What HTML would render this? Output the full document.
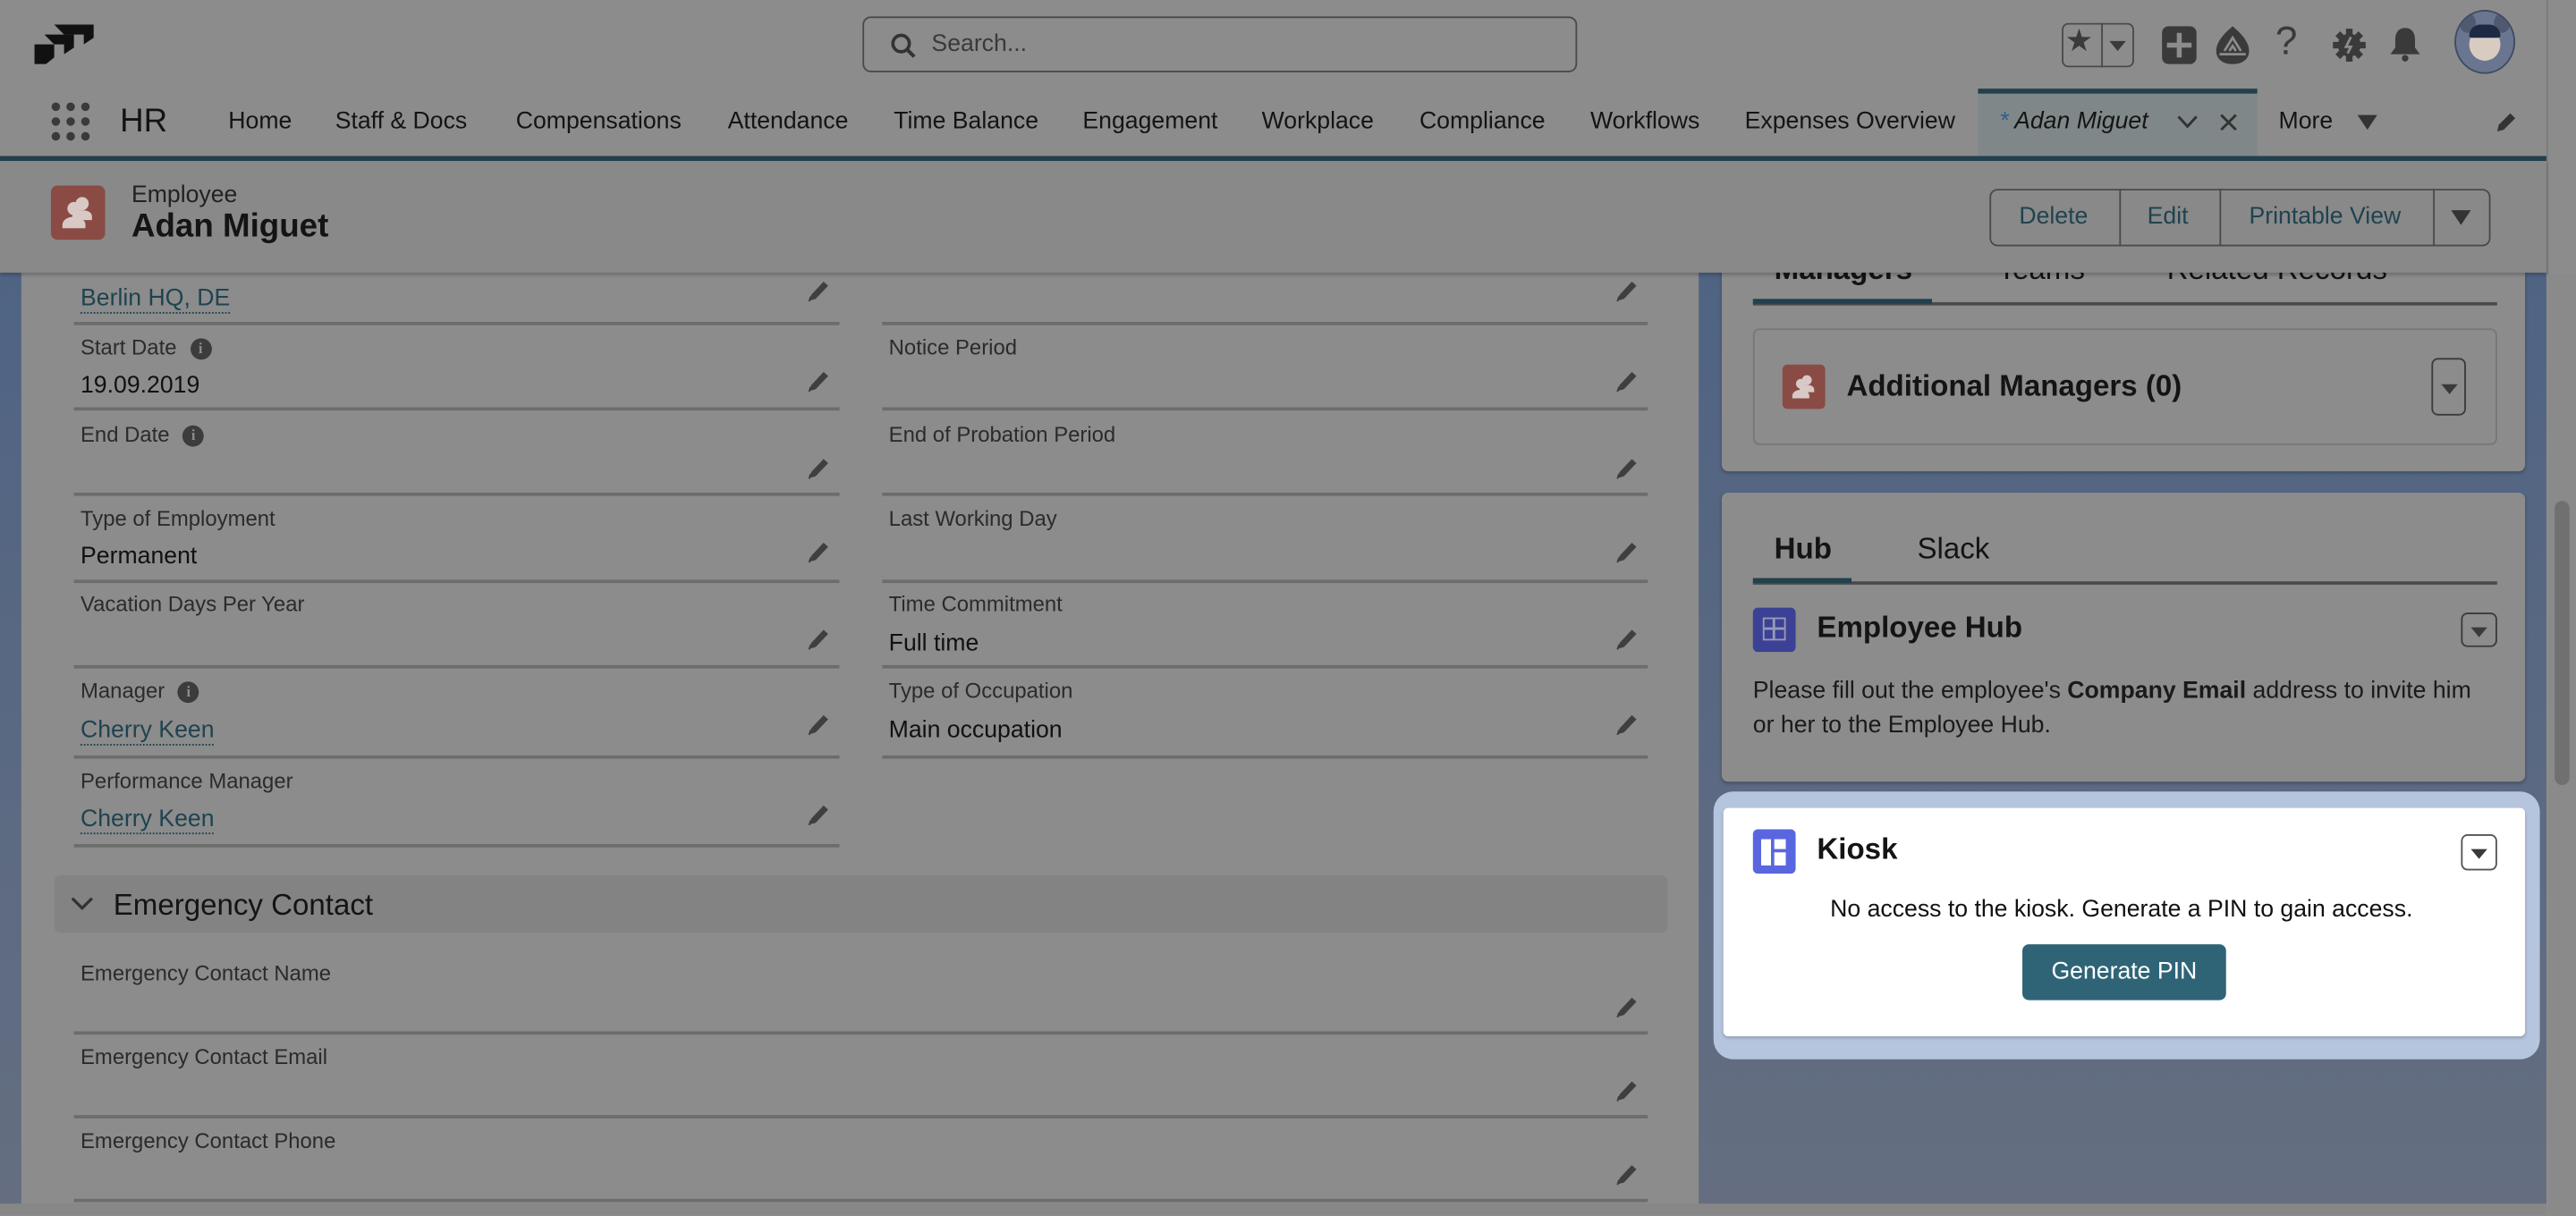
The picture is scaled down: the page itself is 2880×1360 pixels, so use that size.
<!DOCTYPE html>
<html><head><meta charset="utf-8"><style>
*{box-sizing:border-box;margin:0;padding:0}
html,body{width:2880px;height:1360px;overflow:hidden;background:#8c8c8c}
#w{position:absolute;left:0;top:0;width:1568px;height:740px;transform:scale(1.836735);transform-origin:0 0;font-family:"Liberation Sans",sans-serif;color:#141414;background:#8c8c8c}
.a{position:absolute}
.t{position:absolute;white-space:nowrap}
.nav{font-size:14.5px;top:66px;color:#141414}
.lbl{font-size:13px;color:#2b2b2b}
.val{font-size:14.5px;color:#111}
.lnk{font-size:14.5px;color:#1f4350;border-bottom:1px dotted #1f4350;line-height:15px}
.div{position:absolute;height:1.5px;background:#6c6c6c}
.pen{position:absolute;width:14px;height:14px}
.dd{position:absolute;border:1px solid #3a3a3a;border-radius:4px}
.dd:after{content:"";position:absolute;left:50%;top:50%;margin:-2px 0 0 -5px;border-left:5px solid transparent;border-right:5px solid transparent;border-top:6px solid #3a3a3a}
.ii{display:inline-block;width:13px;height:13px;border-radius:50%;background:#3c3c3c;color:#8c8c8c;font-size:9px;font-weight:bold;text-align:center;line-height:13px;margin-left:8px;vertical-align:1px;font-family:"Liberation Serif",serif}
.hz{z-index:5}
</style></head><body><div id="w">
<!-- body background -->
<div class="a" style="left:0;top:160px;width:1550px;height:573px;background:linear-gradient(180deg,#4f6383,#5c6a82 60%,#646e80)"></div>
<div class="a" style="left:13px;top:160px;width:1021px;height:573px;background:#8c8c8c"></div>
<div class="a" style="left:0;top:733px;width:1550px;height:7px;background:#878787"></div>
<div class="a" style="left:1551px;top:167px;width:17px;height:573px;background:#8a8a8a"></div>
<div class="a" style="left:1555px;top:305px;width:9px;height:173px;background:#707070;border-radius:5px"></div>

<!-- top bar -->
<div class="a hz" style="left:0;top:0;width:1550px;height:95px;background:#8c8c8c"></div>
<svg class="a hz" style="left:19px;top:15px" width="40" height="26" viewBox="0 0 40 26"><path d="M14 0h24v8l-6 4V6H20z" fill="#111"/><path d="M8 6h18v8l-6 4v-6H14z" fill="#111"/><path d="M2 12h12v8l-5 4H2z" fill="#111"/></svg>
<div class="a hz" style="left:525px;top:10px;width:435px;height:34px;border:1.5px solid #4a4a4a;border-radius:5px"></div>
<svg class="a hz" style="left:542px;top:20px" width="16" height="16" viewBox="0 0 16 16"><circle cx="6.5" cy="6.5" r="5" fill="none" stroke="#333" stroke-width="2"/><path d="M10 10l4.5 4.5" stroke="#333" stroke-width="2.2"/></svg>
<div class="t hz" style="left:567px;top:19px;font-size:14.5px;color:#3a3a3a">Search...</div>
<div class="a hz" style="left:1255px;top:14px;width:44px;height:27px;border:1.5px solid #4a4a4a;border-radius:4px"></div>
<div class="a hz" style="left:1279px;top:14px;width:1px;height:27px;background:#4a4a4a"></div>
<div class="t hz" style="left:1257px;top:14px;font-size:19px;color:#3a3a3a">★</div>
<div class="a hz" style="left:1284px;top:25px;border-left:5px solid transparent;border-right:5px solid transparent;border-top:6px solid #3a3a3a"></div>
<div class="a hz" style="left:1316px;top:16px;width:21px;height:23px;background:#3a3a3a;border-radius:4px"></div>
<div class="a hz" style="left:1325px;top:20px;width:3px;height:15px;background:#8c8c8c"></div>
<div class="a hz" style="left:1319px;top:26px;width:15px;height:3px;background:#8c8c8c"></div>
<svg class="a hz" style="left:1348px;top:15px" width="22" height="25" viewBox="0 0 22 25"><path d="M11 1C5 6 1 11 1 16c0 5 4 8 10 8s10-3 10-8C21 11 17 6 11 1z" fill="#3a3a3a"/><path d="M6 16l5-8 5 8M9 16l2-3 2 3" stroke="#8c8c8c" stroke-width="1.5" fill="none"/><path d="M3 18h16" stroke="#8c8c8c" stroke-width="1.5"/></svg>
<div class="t hz" style="left:1385px;top:12px;font-size:24px;color:#3a3a3a">?</div>
<svg class="a hz" style="left:1420px;top:17px" width="20" height="21" viewBox="0 0 20 20"><circle cx="10" cy="10" r="7" fill="#3a3a3a"/><g stroke="#3a3a3a" stroke-width="4"><path d="M10 0v4M10 16v4M0 10h4M16 10h4M3 3l3 3M14 14l3 3M3 17l3-3M14 6l3-3"/></g><path d="M11 5l-3 6h3l-2 4" stroke="#8c8c8c" stroke-width="1.5" fill="none"/></svg>
<svg class="a hz" style="left:1454px;top:16px" width="20" height="22" viewBox="0 0 20 22"><path d="M10 1c-4 0-6 3-6 7v5l-3 4h18l-3-4V8c0-4-2-7-6-7z" fill="#3a3a3a"/><circle cx="10" cy="19.5" r="2" fill="#3a3a3a"/></svg>
<div class="a hz" style="left:1494px;top:6px;width:37px;height:39px;border-radius:50%;background:#6a7590;border:1.5px solid #3f4b63;overflow:hidden"><div class="a" style="left:2px;top:1px;width:10px;height:12px;border-radius:50%;background:#4f5a72"></div><div class="a" style="left:23px;top:1px;width:10px;height:12px;border-radius:50%;background:#4f5a72"></div><div class="a" style="left:8px;top:10px;width:19px;height:20px;border-radius:50%;background:#d8ccc0"></div><div class="a" style="left:8px;top:8px;width:19px;height:8px;border-radius:10px 10px 2px 2px;background:#1e2a44"></div></div>
<!-- nav -->
<svg class="a hz" style="left:31px;top:62px" width="24" height="24" viewBox="0 0 24 24" fill="#3a3a3a"><circle cx="3" cy="3" r="2.6"/><circle cx="12" cy="3" r="2.6"/><circle cx="21" cy="3" r="2.6"/><circle cx="3" cy="12" r="2.6"/><circle cx="12" cy="12" r="2.6"/><circle cx="21" cy="12" r="2.6"/><circle cx="3" cy="21" r="2.6"/><circle cx="12" cy="21" r="2.6"/><circle cx="21" cy="21" r="2.6"/></svg>
<div class="t hz" style="left:73px;top:63px;font-size:20px">HR</div>
<div class="t nav hz" style="left:139px">Home</div>
<div class="t nav hz" style="left:204px">Staff &amp; Docs</div>
<div class="t nav hz" style="left:314px">Compensations</div>
<div class="t nav hz" style="left:443px">Attendance</div>
<div class="t nav hz" style="left:544px">Time Balance</div>
<div class="t nav hz" style="left:659px">Engagement</div>
<div class="t nav hz" style="left:768px">Workplace</div>
<div class="t nav hz" style="left:864px">Compliance</div>
<div class="t nav hz" style="left:968px">Workflows</div>
<div class="t nav hz" style="left:1062px">Expenses Overview</div>
<div class="a hz" style="left:1204px;top:54px;width:170px;height:42px;background:#7f8789;border-top:3px solid #22404d"></div>
<div class="t nav hz" style="left:1217px;font-style:italic"><span style="color:#2d5f8f">*</span> Adan Miguet</div>
<svg class="a hz" style="left:1325px;top:70px" width="13" height="9" viewBox="0 0 13 9"><path d="M1 1l5.5 6L12 1" stroke="#333" stroke-width="1.6" fill="none"/></svg>
<svg class="a hz" style="left:1351px;top:69px" width="11" height="11" viewBox="0 0 11 11"><path d="M1 1l9 9M10 1l-9 9" stroke="#333" stroke-width="1.6"/></svg>
<div class="t nav hz" style="left:1387px">More</div>
<div class="a hz" style="left:1435px;top:70px;border-left:6px solid transparent;border-right:6px solid transparent;border-top:9px solid #333"></div>
<svg class="pen hz" style="left:1518px;top:68px" viewBox="0 0 14 14"><path d="M2 12l1-4 7-7 3 3-7 7z" fill="#333"/></svg>
<div class="a hz" style="left:0;top:95px;width:1550px;height:3px;background:#22404d"></div>
<div class="a hz" style="left:1550px;top:0;width:1px;height:167px;background:#7a7a7a"></div>
<!-- record header -->
<div class="a hz" style="left:0;top:98px;width:1550px;height:68px;background:#898989;box-shadow:0 2px 2px rgba(0,0,0,.2)"></div>
<div class="a hz" style="left:31px;top:113px;width:33px;height:33px;background:#8a4b44;border-radius:4px"></div>
<svg class="a hz" style="left:36px;top:118px" width="23" height="23" viewBox="0 0 23 23" fill="#d8c9c6"><circle cx="14" cy="6" r="4"/><path d="M8 14c0-3 3-4 6-4s6 1 6 4v2H8z"/><circle cx="9" cy="9" r="4"/><path d="M2 19c0-3 3-5 7-5s7 2 7 5v2H2z"/></svg>
<div class="t hz" style="left:80px;top:111px;font-size:14.5px;color:#222">Employee</div>
<div class="t hz" style="left:80px;top:127px;font-size:20px;font-weight:bold">Adan Miguet</div>
<div class="a hz" style="left:1211px;top:115px;width:305px;height:35px;border:1.5px solid #4a4a4a;border-radius:5px"></div>
<div class="a hz" style="left:1290px;top:115px;width:1px;height:35px;background:#4a4a4a"></div>
<div class="a hz" style="left:1351px;top:115px;width:1px;height:35px;background:#4a4a4a"></div>
<div class="a hz" style="left:1481px;top:115px;width:1px;height:35px;background:#4a4a4a"></div>
<div class="t hz" style="left:1229px;top:124px;font-size:14.5px;color:#1f4350">Delete</div>
<div class="t hz" style="left:1307px;top:124px;font-size:14.5px;color:#1f4350">Edit</div>
<div class="t hz" style="left:1369px;top:124px;font-size:14.5px;color:#1f4350">Printable View</div>
<div class="a hz" style="left:1492px;top:128px;border-left:6px solid transparent;border-right:6px solid transparent;border-top:9px solid #333"></div>

<!-- left fields -->
<div class="t lnk" style="left:49px;top:175px">Berlin HQ, DE</div>
<div class="div" style="left:45px;top:196px;width:466px"></div>
<div class="div" style="left:537px;top:196px;width:466px"></div>

<div class="t lbl" style="left:49px;top:204px">Start Date<span class="ii">i</span></div>
<div class="t val" style="left:49px;top:227px">19.09.2019</div>
<div class="div" style="left:45px;top:248px;width:466px"></div>
<div class="t lbl" style="left:541px;top:204px">Notice Period</div>
<div class="div" style="left:537px;top:248px;width:466px"></div>

<div class="t lbl" style="left:49px;top:257px">End Date<span class="ii">i</span></div>
<div class="div" style="left:45px;top:300px;width:466px"></div>
<div class="t lbl" style="left:541px;top:257px">End of Probation Period</div>
<div class="div" style="left:537px;top:300px;width:466px"></div>

<div class="t lbl" style="left:49px;top:308px">Type of Employment</div>
<div class="t val" style="left:49px;top:331px">Permanent</div>
<div class="div" style="left:45px;top:353px;width:466px"></div>
<div class="t lbl" style="left:541px;top:308px">Last Working Day</div>
<div class="div" style="left:537px;top:353px;width:466px"></div>

<div class="t lbl" style="left:49px;top:360px">Vacation Days Per Year</div>
<div class="div" style="left:45px;top:405px;width:466px"></div>
<div class="t lbl" style="left:541px;top:360px">Time Commitment</div>
<div class="t val" style="left:541px;top:384px">Full time</div>
<div class="div" style="left:537px;top:405px;width:466px"></div>

<div class="t lbl" style="left:49px;top:413px">Manager<span class="ii">i</span></div>
<div class="t lnk" style="left:49px;top:438px">Cherry Keen</div>
<div class="div" style="left:45px;top:460px;width:466px"></div>
<div class="t lbl" style="left:541px;top:413px">Type of Occupation</div>
<div class="t val" style="left:541px;top:437px">Main occupation</div>
<div class="div" style="left:537px;top:460px;width:466px"></div>

<div class="t lbl" style="left:49px;top:468px">Performance Manager</div>
<div class="t lnk" style="left:49px;top:492px">Cherry Keen</div>
<div class="div" style="left:45px;top:514px;width:466px"></div>

<div class="a" style="left:33px;top:533px;width:982px;height:35px;background:#838383;border-radius:4px"></div>
<svg class="a" style="left:43px;top:546px" width="14" height="9" viewBox="0 0 14 9"><path d="M1 1l6 6 6-6" stroke="#333" stroke-width="1.8" fill="none"/></svg>
<div class="t" style="left:69px;top:541px;font-size:18px">Emergency Contact</div>

<div class="t lbl" style="left:49px;top:585px">Emergency Contact Name</div>
<div class="div" style="left:45px;top:628px;width:958px"></div>
<div class="t lbl" style="left:49px;top:636px">Emergency Contact Email</div>
<div class="div" style="left:45px;top:679px;width:958px"></div>
<div class="t lbl" style="left:49px;top:687px">Emergency Contact Phone</div>
<div class="div" style="left:45px;top:730px;width:958px"></div>

<!-- pencils -->
<svg width="0" height="0" style="position:absolute"><defs><symbol id="p" viewBox="0 0 14 14"><path d="M2 13l.8-3.5 7.5-8 2.8 2.5-7.6 8z" fill="#3f3f3f"/><path d="M1.5 13.5l1-3" stroke="#3f3f3f"/></symbol></defs></svg>
<svg class="pen" style="left:491px;top:170px"><use href="#p"/></svg>
<svg class="pen" style="left:983px;top:170px"><use href="#p"/></svg>
<svg class="pen" style="left:491px;top:225px"><use href="#p"/></svg>
<svg class="pen" style="left:983px;top:225px"><use href="#p"/></svg>
<svg class="pen" style="left:491px;top:278px"><use href="#p"/></svg>
<svg class="pen" style="left:983px;top:278px"><use href="#p"/></svg>
<svg class="pen" style="left:491px;top:329px"><use href="#p"/></svg>
<svg class="pen" style="left:983px;top:329px"><use href="#p"/></svg>
<svg class="pen" style="left:491px;top:382px"><use href="#p"/></svg>
<svg class="pen" style="left:983px;top:382px"><use href="#p"/></svg>
<svg class="pen" style="left:491px;top:434px"><use href="#p"/></svg>
<svg class="pen" style="left:983px;top:434px"><use href="#p"/></svg>
<svg class="pen" style="left:491px;top:489px"><use href="#p"/></svg>
<svg class="pen" style="left:983px;top:606px"><use href="#p"/></svg>
<svg class="pen" style="left:983px;top:657px"><use href="#p"/></svg>
<svg class="pen" style="left:983px;top:708px"><use href="#p"/></svg>

<!-- right: managers card -->
<div class="a" style="left:1048px;top:150px;width:489px;height:137px;background:#8c8c8c;border-radius:4px;box-shadow:0 1px 2px rgba(0,0,0,.25)"></div>
<div class="t" style="left:1080px;top:154px;font-size:18px;font-weight:bold">Managers</div>
<div class="t" style="left:1216px;top:154px;font-size:18px">Teams</div>
<div class="t" style="left:1319px;top:154px;font-size:18px">Related Records</div>
<div class="a" style="left:1067px;top:184px;width:453px;height:1.5px;background:#4a4a4a"></div>
<div class="a" style="left:1067px;top:182px;width:109px;height:3px;background:#22404d"></div>
<div class="a" style="left:1067px;top:200px;width:453px;height:71px;border:1px solid #777;border-radius:4px"></div>
<div class="a" style="left:1085px;top:222px;width:26px;height:27px;background:#8a4b44;border-radius:3px"></div>
<svg class="a" style="left:1089px;top:227px" width="18" height="17" viewBox="0 0 23 23" fill="#d8c9c6"><circle cx="14" cy="6" r="4"/><path d="M8 14c0-3 3-4 6-4s6 1 6 4v2H8z"/><circle cx="9" cy="9" r="4"/><path d="M2 19c0-3 3-5 7-5s7 2 7 5v2H2z"/></svg>
<div class="t" style="left:1124px;top:225px;font-size:18px;font-weight:bold">Additional Managers (0)</div>
<div class="dd" style="left:1480px;top:218px;width:21px;height:35px"></div>

<!-- hub card -->
<div class="a" style="left:1048px;top:300px;width:489px;height:176px;background:#8c8c8c;border-radius:4px;box-shadow:0 1px 2px rgba(0,0,0,.25)"></div>
<div class="t" style="left:1080px;top:324px;font-size:18px;font-weight:bold">Hub</div>
<div class="t" style="left:1167px;top:324px;font-size:18px">Slack</div>
<div class="a" style="left:1067px;top:354px;width:453px;height:1.5px;background:#4a4a4a"></div>
<div class="a" style="left:1067px;top:352px;width:60px;height:3px;background:#22404d"></div>
<div class="a" style="left:1067px;top:370px;width:26px;height:27px;background:#3b4194;border-radius:3px"></div>
<div class="a" style="left:1073px;top:376px;width:14px;height:14px;border:1.5px solid #9a9ab8;background:linear-gradient(#9a9ab8,#9a9ab8) 5px 0/1.5px 100% no-repeat,linear-gradient(#9a9ab8,#9a9ab8) 0 5px/100% 1.5px no-repeat"></div>
<div class="t" style="left:1106px;top:372px;font-size:18px;font-weight:bold">Employee Hub</div>
<div class="dd" style="left:1498px;top:373px;width:22px;height:21px"></div>
<div class="t" style="left:1067px;top:411px;font-size:14.5px;line-height:21px;color:#1a1a1a">Please fill out the employee's <b>Company Email</b> address to invite him<br>or her to the Employee Hub.</div>

<!-- kiosk -->
<div class="a" style="left:1043px;top:482px;width:503px;height:163px;background:#b5c5de;border-radius:12px"></div>
<div class="a" style="left:1049px;top:492px;width:488px;height:139px;background:#fff;border-radius:3px;box-shadow:0 1px 2px rgba(0,0,0,.2)"></div>
<div class="a" style="left:1067px;top:505px;width:26px;height:27px;background:#5a66e0;border-radius:3px"></div>
<div class="a" style="left:1072px;top:511px;width:6px;height:16px;background:#fff"></div>
<div class="a" style="left:1080px;top:511px;width:7px;height:6px;background:#fff"></div>
<div class="a" style="left:1080px;top:519px;width:7px;height:8px;background:#fff"></div>
<div class="t" style="left:1106px;top:507px;font-size:18px;font-weight:bold">Kiosk</div>
<div class="dd" style="left:1498px;top:508px;width:22px;height:22px;border-color:#555"></div>
<div class="t" style="left:1114px;top:546px;font-size:14.5px;color:#111">No access to the kiosk. Generate a PIN to gain access.</div>
<div class="a" style="left:1231px;top:575px;width:124px;height:34px;background:#2f6476;border-radius:4px;color:#fff;font-size:14.5px;text-align:center;line-height:34px">Generate PIN</div>
</div></body></html>
